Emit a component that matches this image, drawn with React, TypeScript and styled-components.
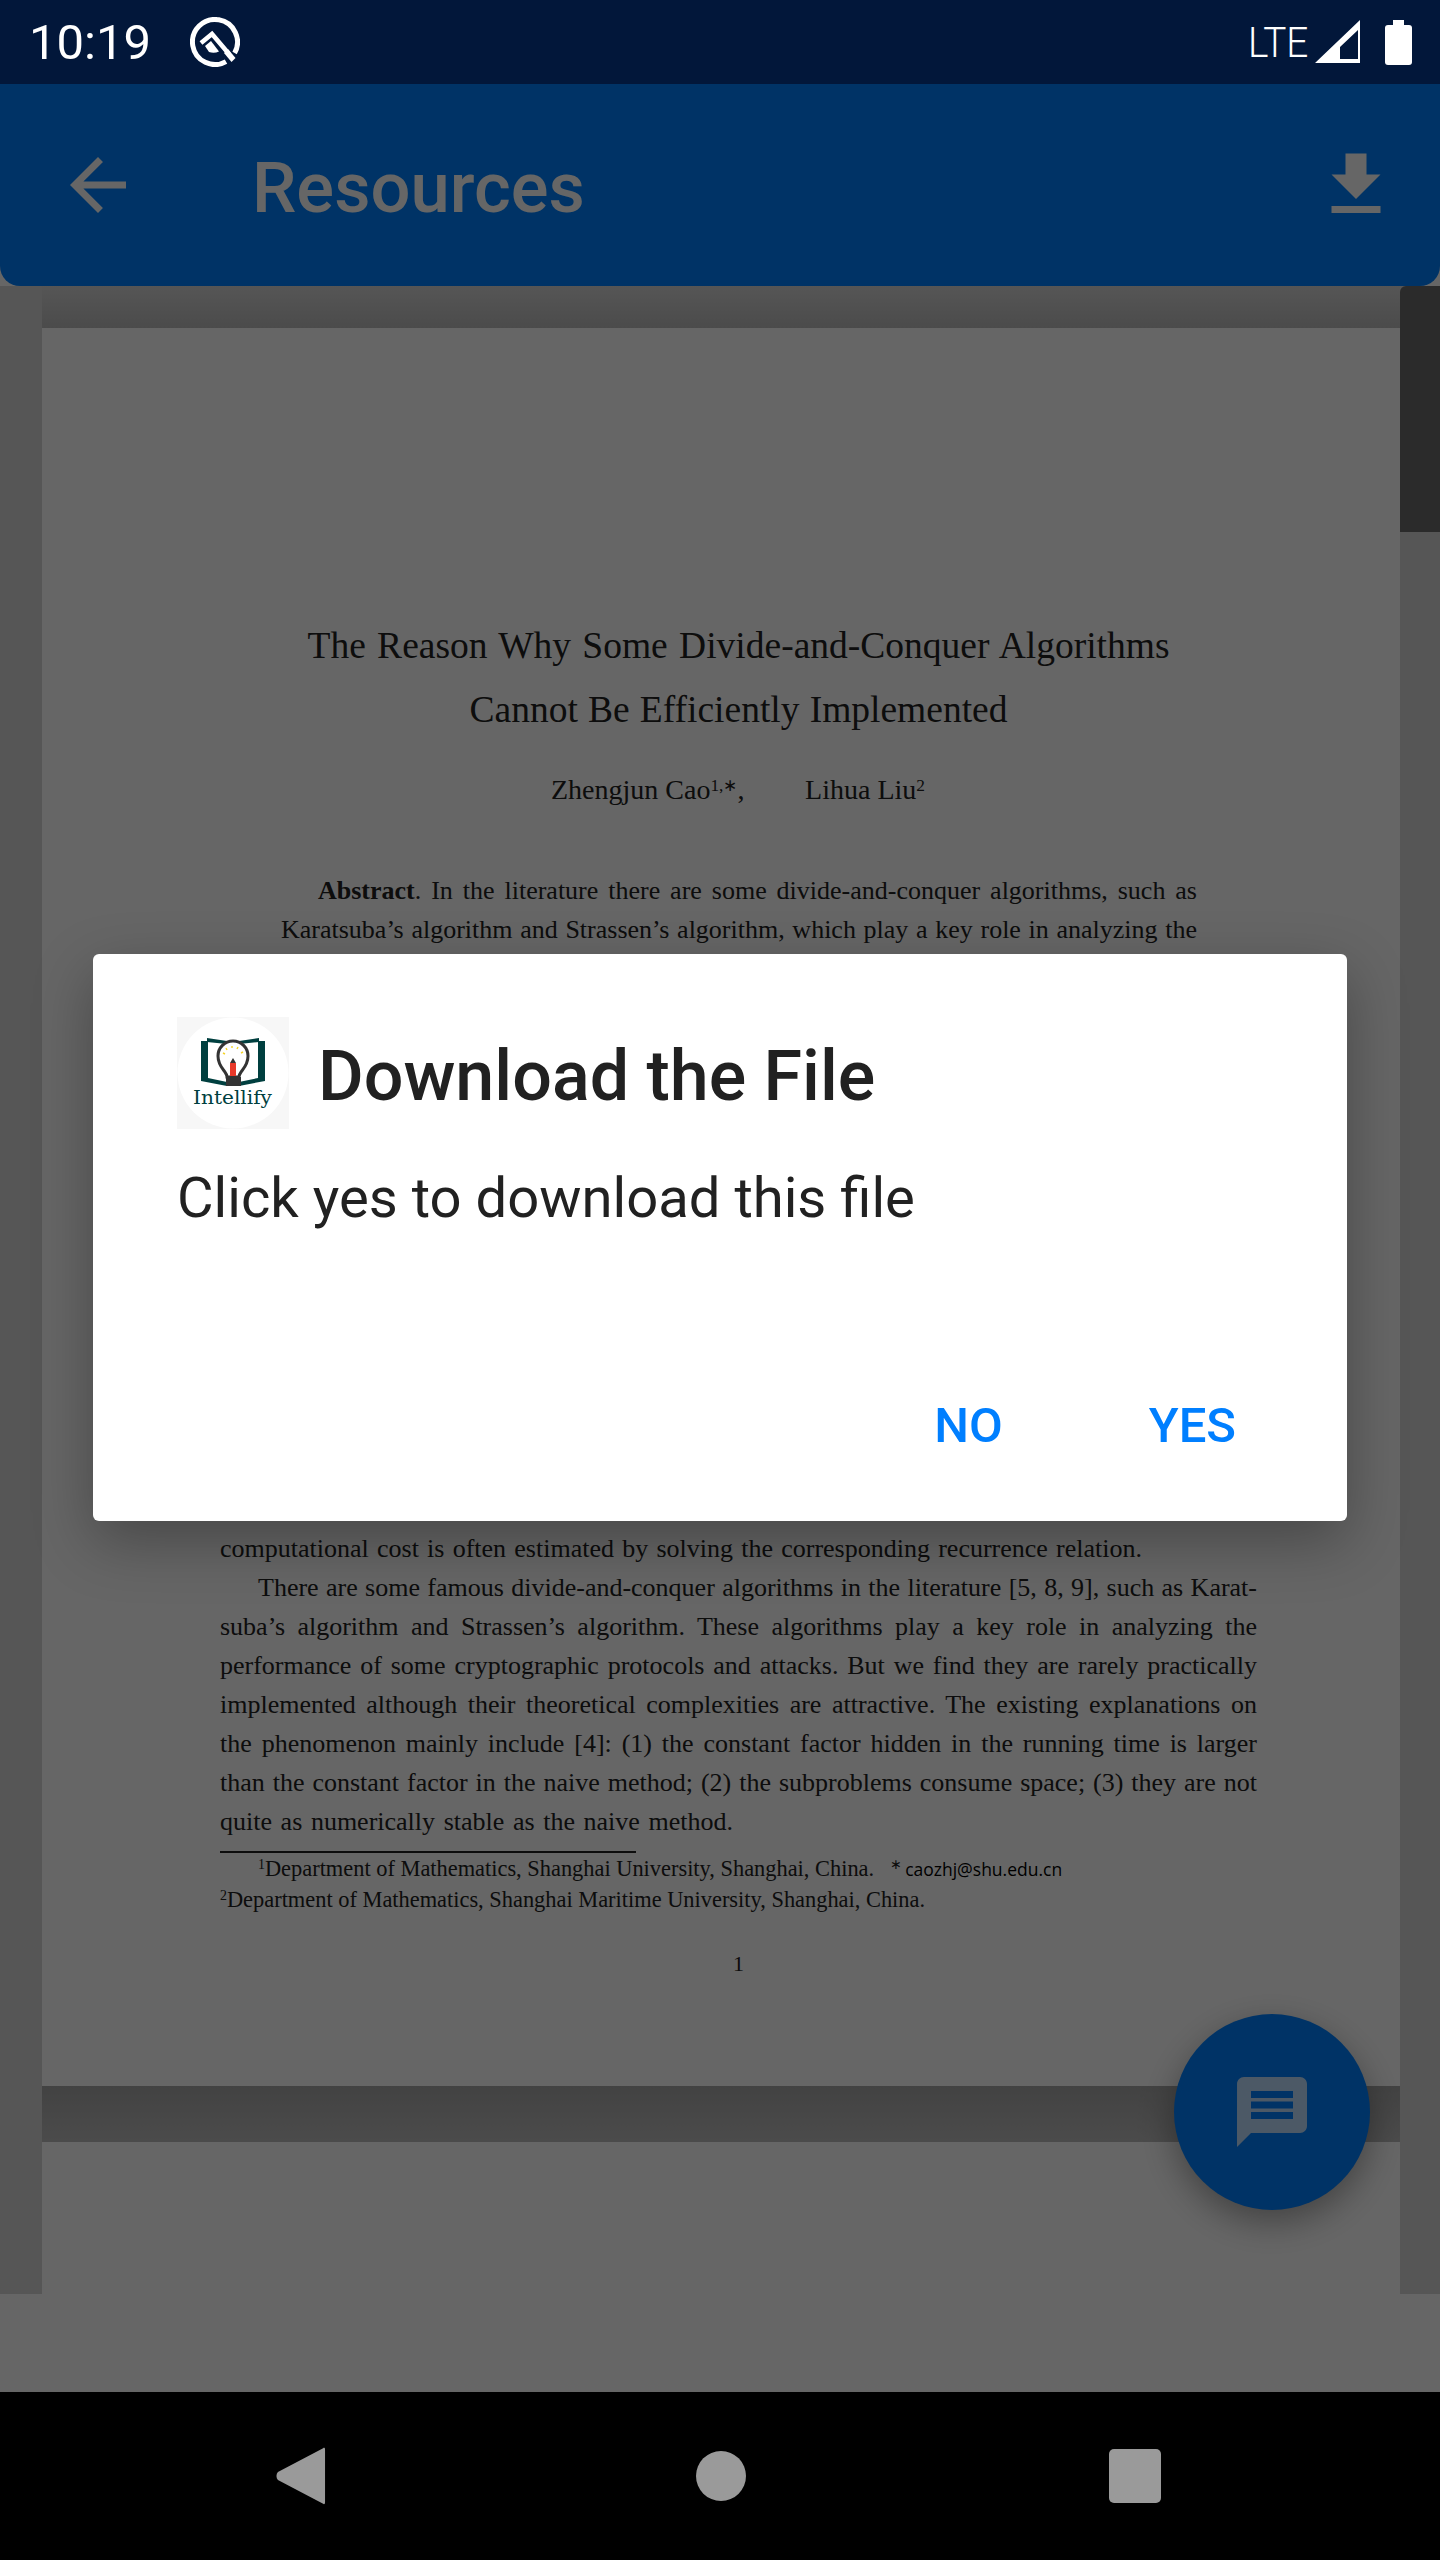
import React from "react";
import styled, { createGlobalStyle } from "styled-components";

const GlobalStyle = createGlobalStyle`
  html, body {
    margin: 0;
    padding: 0;
    background: #000;
  }

  * {
    box-sizing: border-box;
  }
`;

const bodyLines = [
  { width: 922, text: "computational cost is often estimated by solving the corresponding recurrence relation." },
  { width: 999, indent: 38, text: "There are some famous divide-and-conquer algorithms in the literature [5, 8, 9], such as Karat-" },
  { width: 1037, text: "suba’s algorithm and Strassen’s algorithm.  These algorithms play a key role in analyzing the" },
  { width: 1037, text: "performance of some cryptographic protocols and attacks. But we find they are rarely practically" },
  { width: 1037, text: "implemented although their theoretical complexities are attractive.  The existing explanations on" },
  { width: 1037, text: "the phenomenon mainly include [4]:  (1) the constant factor hidden in the running time is larger" },
  { width: 1037, text: "than the constant factor in the naive method; (2) the subproblems consume space; (3) they are not" },
  { width: 513, text: "quite as numerically stable as the naive method." },
];

const App: React.FC = () => {
  return (
    <Screen>
      <GlobalStyle />
      <StatusBar>
        <StatusGroup>
          <Clock>10:19</Clock>
          <svg width="50" height="50" viewBox="0 0 50 50">
            <path
              d="M36 44.600A22.500 22.500 0 1 1 44.600 36"
              fill="none"
              stroke="#fff"
              strokeWidth="5"
            />
            <path d="M11 26L22 17L39 37" fill="none" stroke="#fff" strokeWidth="4.500" />
            <path d="M15 29l6-5 8 10.500a13 13 0 0 1-10 .500z" fill="#fff" />
            <path d="M34 36l4-4 7.500 9-4 4z" fill="#fff" />
          </svg>
        </StatusGroup>
        <StatusGroup>
          <NetworkLabel>LTE</NetworkLabel>
          <svg width="46" height="44" viewBox="0 0 46 44">
            <path
              fillRule="evenodd"
              d="M0 43L45 0v43zM25 39h18V10L25 27z"
              fill="#fff"
            />
          </svg>
          <Battery />
        </StatusGroup>
      </StatusBar>

      <Main>
        <AppBar>
          <IconSlot>
            <svg width="84" height="84" viewBox="0 0 24 24" fill="#fff">
              <path d="M20 11H7.83l5.59-5.59L12 4l-8 8 8 8 1.41-1.41L7.83 13H20v-2z" />
            </svg>
          </IconSlot>
          <AppBarTitle>Resources</AppBarTitle>
          <IconSlot>
            <svg width="84" height="84" viewBox="0 0 24 24" fill="#fff">
              <path d="M19 9h-4V3H9v6H5l7 7 7-7zM5 18v2h14v-2H5z" />
            </svg>
          </IconSlot>
        </AppBar>

        <Viewer>
          <Gutter />
          <PageColumn>
            <PageGap $from="#d6d6d6" $to="#bcbcbc" $height={42} />
            <Sheet>
              <TitleLine $width={862}>The Reason Why Some Divide-and-Conquer Algorithms</TitleLine>
              <TitleLine $width={538}>Cannot Be Efficiently Implemented</TitleLine>
              <Authors>
                <span>
                  Zhengjun Cao<Sup>1,∗</Sup>,
                </span>
                <span>
                  Lihua Liu<Sup>2</Sup>
                </span>
              </Authors>
              <Abstract>
                <Line $width={879} $indent={37}>
                  <b>Abstract</b>. In the literature there are some divide-and-conquer algorithms, such as
                </Line>
                <Line $width={916}>
                  Karatsuba’s algorithm and Strassen’s algorithm, which play a key role in analyzing the
                </Line>
              </Abstract>
              <Intro>
                {bodyLines.map((l) => (
                  <Line key={l.text} $width={l.width} $indent={l.indent}>
                    {l.text}
                  </Line>
                ))}
              </Intro>
              <FootRule />
              <Footnote $indent={38}>
                <Sup>1</Sup>Department of Mathematics, Shanghai University, Shanghai, China.
                <Star>
                  <Sup>∗</Sup>
                </Star>
                <Email>caozhj@shu.edu.cn</Email>
              </Footnote>
              <Footnote>
                <Sup>2</Sup>Department of Mathematics, Shanghai Maritime University, Shanghai, China.
              </Footnote>
              <PageNumber>1</PageNumber>
            </Sheet>
            <PageGap $from="#a6a6a6" $to="#bcbcbc" $height={56} />
            <NextSheet />
          </PageColumn>
          <Gutter>
            <ScrollThumb />
          </Gutter>
        </Viewer>
        <BottomSpace />

        <ChatFab>
          <svg width="84" height="84" viewBox="0 0 24 24" fill="#fff" fillOpacity="0.75">
            <path d="M20 2H4c-1.1 0-1.99.9-1.99 2L2 22l4-4h14c1.1 0 2-.9 2-2V4c0-1.1-.9-2-2-2zm-2 12H6v-2h12v2zm0-3H6V9h12v2zm0-3H6V6h12v2z" />
          </svg>
        </ChatFab>

        <Scrim>
          <Dialog>
            <DialogHeader>
              <svg width="112" height="112" viewBox="0 0 112 112">
                <rect width="112" height="112" fill="#f7f7f7" />
                <circle cx="56" cy="56" r="55.5" fill="#fff" />
                <path d="M24 24h7v37l19 4v4l-26-5z" fill="#003f3f" />
                <path d="M88 24h-7v37l-19 4v4l26-5z" fill="#003f3f" />
                <path d="M30 21l20 3v3l-20-2zM82 21l-20 3v3l20-2z" fill="#003f3f" />
                <path
                  d="M50 60c0-6-9-9-9-21a15 15 0 0 1 30 0c0 12-9 15-9 21z"
                  fill="#fff"
                  stroke="#333"
                  strokeWidth="3"
                />
                <path d="M49 60h15v9H49z" fill="#333" />
                <path d="M53 46l3-5 3 5z" fill="#333" />
                <path d="M53 46h6v13h-6z" fill="#e8392a" />
                <path
                  d="M46 36l2 1M49 31l1 2M55 29v2M61 30l-1 2M66 35l-2 1"
                  stroke="#f5d327"
                  strokeWidth="1.4"
                />
                <LogoText x="16" y="87" textLength="79" lengthAdjust="spacingAndGlyphs">
                  Intellify
                </LogoText>
              </svg>
              <DialogTitle>Download the File</DialogTitle>
            </DialogHeader>
            <DialogBody>Click yes to download this file</DialogBody>
            <DialogActions>
              <ActionButton>NO</ActionButton>
              <ActionButton>YES</ActionButton>
            </DialogActions>
          </Dialog>
        </Scrim>
      </Main>

      <NavBar>
        <svg width="50" height="58" viewBox="0 0 52 58" fill="#9a9a9a" preserveAspectRatio="none">
          <path d="M49 1.200c.8-.8 2-.4 2 1V55.800c0 1.400-1.200 1.800-2 1L2 33c-2-2.200-2-5.800 0-8z" />
        </svg>
        <NavCircle />
        <NavSquare />
      </NavBar>
    </Screen>
  );
};

export default App;

const Screen = styled.div`
  width: 1440px;
  height: 2560px;
  display: flex;
  flex-direction: column;
  font-family: Roboto, sans-serif;
  overflow: hidden;
`;

const StatusBar = styled.div`
  height: 84px;
  padding: 0 28px 0 29px;
  display: flex;
  align-items: center;
  justify-content: space-between;
  background: #02173a;
  color: #fff;
`;

const StatusGroup = styled.div`
  display: flex;
  align-items: center;
  gap: 8px;
`;

const Clock = styled.span`
  font-size: 49px;
  margin-right: 31px;
`;

const NetworkLabel = styled.span`
  font-size: 43px;
  font-weight: 300;
  width: 57px;
  display: inline-block;
  transform: translateX(-2px) scaleX(0.9);
  transform-origin: left center;
  white-space: nowrap;
`;

const Battery = styled.div`
  position: relative;
  width: 27px;
  height: 40px;
  margin: 5px 0 0 16px;
  border-radius: 3px;
  background: #fff;

  &::before {
    content: "";
    position: absolute;
    top: -5px;
    left: 8px;
    width: 11px;
    height: 6px;
    background: #fff;
  }
`;

const Main = styled.div`
  position: relative;
  flex: 1;
  display: flex;
  flex-direction: column;
  background: #fff;
`;

const AppBar = styled.div`
  height: 202px;
  padding: 0 42px 0 56px;
  display: flex;
  align-items: center;
  background: #0080ff;
  border-radius: 0 0 20px 20px;
  color: #fff;
`;

const IconSlot = styled.div`
  width: 84px;
  height: 84px;
  flex-shrink: 0;
`;

const AppBarTitle = styled.div`
  flex: 1;
  margin-left: 112px;
  padding-top: 5px;
  font-size: 70.5px;
  font-weight: 500;
`;

const Viewer = styled.div`
  height: 2008px;
  display: grid;
  grid-template-columns: 42px 1fr 40px;
  overflow: hidden;
`;

const Gutter = styled.div`
  background: #d8d8d8;
`;

const ScrollThumb = styled.div`
  height: 246px;
  background: #6b6b6b;
  border-radius: 6px 0 0 0;
`;

const PageColumn = styled.div`
  display: flex;
  flex-direction: column;
`;

const PageGap = styled.div<{ $from: string; $to: string; $height: number }>`
  height: ${(p) => p.$height}px;
  background: linear-gradient(${(p) => p.$from}, ${(p) => p.$to});
`;

const Sheet = styled.div`
  height: 1758px;
  padding: 285.5px 143px 0 178px;
  display: flex;
  flex-direction: column;
  background: #fff;
  color: #222;
  font-family: "Liberation Serif", serif;
  font-size: 26px;
  line-height: 39px;
`;

const NextSheet = styled.div`
  flex: 1;
  background: #fff;
`;

const Line = styled.div<{ $width: number; $indent?: number }>`
  width: ${(p) => p.$width + (p.$indent ?? 0)}px;
  height: 39px;
  padding-left: ${(p) => p.$indent ?? 0}px;
  text-align: justify;
  text-align-last: justify;
`;

const TitleLine = styled.div<{ $width: number }>`
  width: ${(p) => p.$width}px;
  height: 64px;
  align-self: center;
  font-size: 37.5px;
  line-height: 64px;
  text-align: justify;
  text-align-last: justify;
`;

const Authors = styled.div`
  margin: 28px 0 0 331px;
  width: 374px;
  display: flex;
  justify-content: space-between;
  font-size: 28px;
  line-height: 40px;
`;

const Sup = styled.sup`
  font-size: 0.62em;
  line-height: 0;
  vertical-align: 0.48em;
`;

const Abstract = styled.div`
  margin: 61px 0 0 61px;
`;

const Intro = styled.div`
  margin-top: 580.5px;
`;

const FootRule = styled.div`
  width: 416px;
  height: 2px;
  margin-top: 10px;
  background: #222;
`;

const Footnote = styled.div<{ $indent?: number }>`
  height: 31px;
  padding-left: ${(p) => p.$indent ?? 0}px;
  font-size: 22.4px;
  line-height: 31px;
  white-space: nowrap;
`;

const Star = styled.span`
  margin: 0 3px 0 16px;
`;

const Email = styled.span`
  font-family: "Open Sans", sans-serif;
  font-size: 17.5px;
  color: #000;
`;

const PageNumber = styled.div`
  margin-top: 34px;
  align-self: center;
  font-size: 22px;
  line-height: 30px;
`;

const BottomSpace = styled.div`
  flex: 1;
`;

const ChatFab = styled.div`
  position: absolute;
  right: 70px;
  bottom: 182px;
  width: 196px;
  height: 196px;
  display: flex;
  align-items: center;
  justify-content: center;
  border-radius: 50%;
  background: #0080ff;
  box-shadow: 0 12px 34px rgba(0, 0, 0, 0.35);
`;

const Scrim = styled.div`
  position: absolute;
  inset: 0;
  display: flex;
  align-items: center;
  justify-content: center;
  background: rgba(0, 0, 0, 0.6);
`;

const Dialog = styled.div`
  width: 1254px;
  height: 567px;
  margin-bottom: 2px;
  padding: 63px 111px 0 84px;
  display: flex;
  flex-direction: column;
  border-radius: 6px;
  background: #fff;
  color: #212121;
  box-shadow: 0 20px 60px rgba(0, 0, 0, 0.3);
`;

const DialogHeader = styled.div`
  display: flex;
  align-items: center;
  gap: 29px;
`;

const LogoText = styled.text`
  font-family: "DejaVu Serif", serif;
  font-size: 18px;
  fill: #003f3f;
`;

const DialogTitle = styled.div`
  padding-top: 6px;
  font-size: 70px;
  font-weight: 500;
`;

const DialogBody = styled.div`
  margin-top: 33px;
  font-size: 56.2px;
  line-height: 72px;
`;

const DialogActions = styled.div`
  margin-top: 164px;
  display: flex;
  justify-content: flex-end;
  gap: 146px;
`;

const ActionButton = styled.div`
  font-size: 49px;
  font-weight: 500;
  line-height: 56px;
  color: #007fff;
`;

const NavBar = styled.div`
  height: 168px;
  padding: 0 279px 0 276px;
  display: flex;
  align-items: center;
  justify-content: space-between;
  background: #000;
`;

const NavCircle = styled.div`
  width: 50px;
  height: 50px;
  margin-left: 6px;
  border-radius: 50%;
  background: #9a9a9a;
`;

const NavSquare = styled.div`
  width: 52px;
  height: 54px;
  border-radius: 5px;
  background: #9a9a9a;
`;
